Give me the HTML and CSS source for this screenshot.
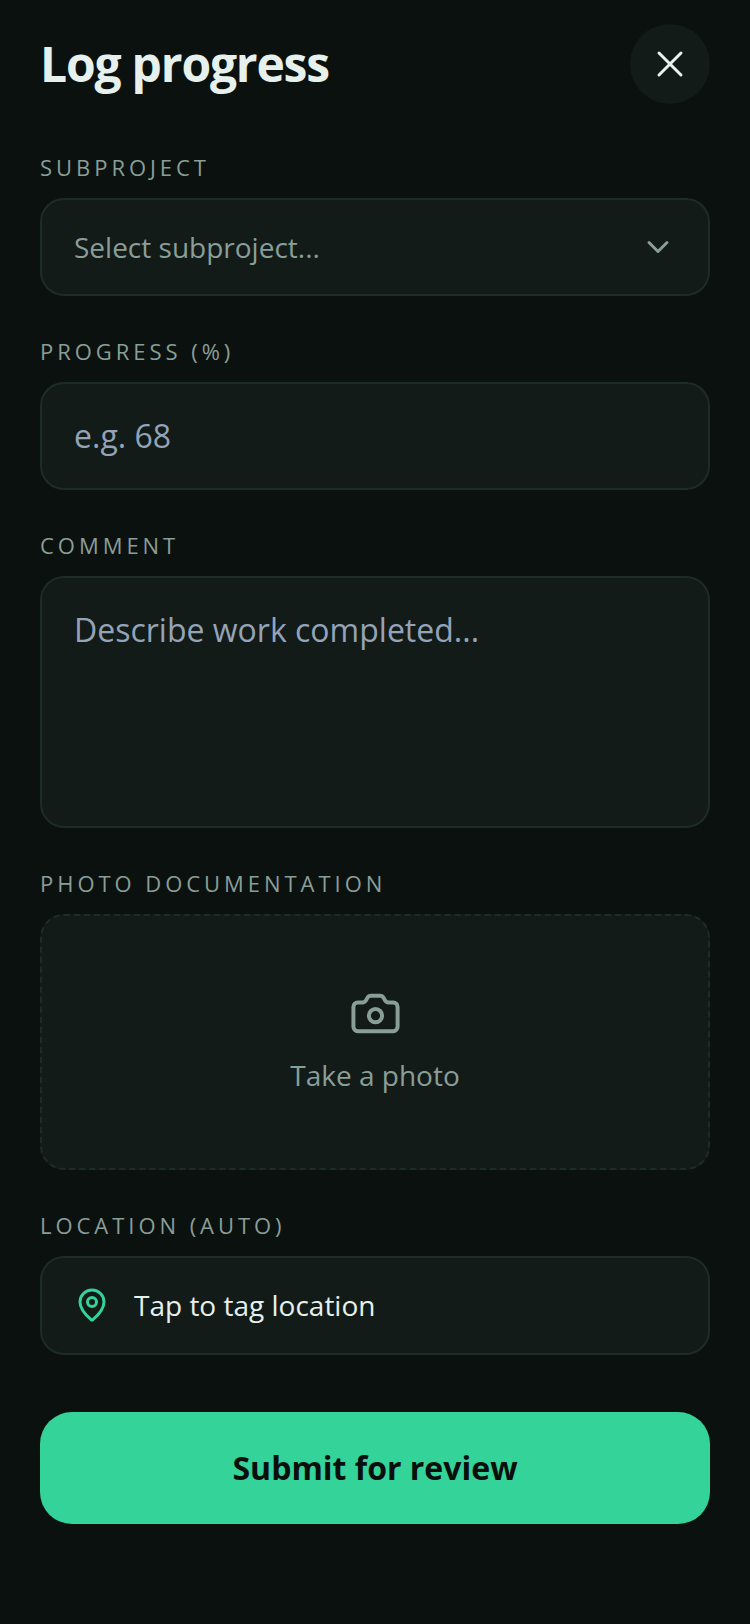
FILE: index.html
```html
<!DOCTYPE html>
<html lang="en">
<head>
    <meta charset="UTF-8">
    <meta name="viewport" content="width=device-width, initial-scale=1.0">
    <title>Log progress</title>
    <link rel="stylesheet" href="styles.css">
</head>
<body>
    <div class="sheet">
        <header class="sheet-header">
            <h1>Log progress</h1>
            <button class="close-btn" type="button" aria-label="Close">
                <svg width="44" height="44" viewBox="0 0 24 24" fill="none" stroke="#e8f2ef" stroke-width="1.6" stroke-linecap="round" stroke-linejoin="round">
                    <path d="M18 6 6 18"/>
                    <path d="m6 6 12 12"/>
                </svg>
            </button>
        </header>

        <div class="field">
            <label class="field-label">SUBPROJECT</label>
            <div class="control control-select">
                <span>Select subproject...</span>
                <svg width="36" height="36" viewBox="0 0 24 24" fill="none" stroke="#8a9e98" stroke-width="2" stroke-linecap="round" stroke-linejoin="round">
                    <path d="m6 9 6 6 6-6"/>
                </svg>
            </div>
        </div>

        <div class="field">
            <label class="field-label">PROGRESS (%)</label>
            <input class="control control-input" type="text" placeholder="e.g. 68">
        </div>

        <div class="field">
            <label class="field-label">COMMENT</label>
            <textarea class="control control-textarea" placeholder="Describe work completed..."></textarea>
        </div>

        <div class="field">
            <label class="field-label">PHOTO DOCUMENTATION</label>
            <div class="photo-drop">
                <svg width="53" height="53" viewBox="0 0 24 24" fill="none" stroke="#8a9e98" stroke-width="1.8" stroke-linecap="round" stroke-linejoin="round">
                    <path d="M13.997 4a2 2 0 0 1 1.76 1.05l.486.9A2 2 0 0 0 18.003 7H20a2 2 0 0 1 2 2v9a2 2 0 0 1-2 2H4a2 2 0 0 1-2-2V9a2 2 0 0 1 2-2h1.997a2 2 0 0 0 1.76-1.05l.486-.9A2 2 0 0 1 10.003 4z"/>
                    <circle cx="12" cy="13" r="3"/>
                </svg>
                <span>Take a photo</span>
            </div>
        </div>

        <div class="field">
            <label class="field-label">LOCATION (AUTO)</label>
            <div class="control control-location">
                <svg width="36" height="36" viewBox="0 0 24 24" fill="none" stroke="#34d399" stroke-width="2" stroke-linecap="round" stroke-linejoin="round">
                    <path d="M20 10c0 4.993-5.539 10.193-7.399 11.799a1 1 0 0 1-1.202 0C9.539 20.193 4 14.993 4 10a8 8 0 0 1 16 0"/>
                    <circle cx="12" cy="10" r="3"/>
                </svg>
                <span>Tap to tag location</span>
            </div>
        </div>

        <button class="submit-btn" type="button">Submit for review</button>
    </div>
</body>
</html>
```

FILE: styles.css
```css
* {
    box-sizing: border-box;
}

body {
    margin: 0;
    background-color: #0b110f;
    font-family: "Open Sans", sans-serif;
    color: #e8f2ef;
}

.sheet {
    height: 1624px;
    padding: 24px 40px 0;
    overflow: hidden;
}

.sheet-header {
    display: flex;
    justify-content: space-between;
    align-items: center;
    height: 80px;
    margin-bottom: 48px;
}

.sheet-header h1 {
    margin: 0 0 2px;
    font-size: 48px;
    font-weight: 700;
    letter-spacing: -1.2px;
    color: #e6f0ed;
}

.close-btn {
    display: flex;
    align-items: center;
    justify-content: center;
    width: 80px;
    height: 80px;
    padding: 0;
    border: none;
    border-radius: 50%;
    background-color: #121b18;
}

.field {
    margin-bottom: 40px;
}

.field-label {
    display: block;
    margin-bottom: 16px;
    height: 30px;
    line-height: 30px;
    font-size: 22px;
    letter-spacing: 3.96px;
    color: #8a9e98;
}

.control {
    display: block;
    width: 100%;
    border: 2px solid #1d2c28;
    border-radius: 24px;
    background-color: #121b18;
    font-family: inherit;
}

.control-select {
    display: flex;
    align-items: center;
    justify-content: space-between;
    height: 98px;
    padding: 0 32px;
    font-size: 28px;
    color: #8a9e98;
}

.control-input {
    height: 108px;
    padding: 0 32px 2px;
    font-size: 32px;
    color: #e8f2ef;
    outline: none;
}

.control-textarea {
    height: 252px;
    padding: 32px;
    font-size: 32px;
    line-height: 40px;
    color: #e8f2ef;
    outline: none;
    resize: none;
}

.control-input::placeholder,
.control-textarea::placeholder {
    color: #94a3b8;
    opacity: 1;
}

.photo-drop {
    display: flex;
    flex-direction: column;
    align-items: center;
    justify-content: center;
    gap: 16px;
    height: 256px;
    padding-bottom: 4px;
    border: 2px dashed #1d2c28;
    border-radius: 24px;
    background-color: #121b18;
    font-size: 28px;
    color: #8a9e98;
}

.control-location {
    display: flex;
    align-items: center;
    gap: 24px;
    height: 99px;
    padding: 0 32px 2px;
    font-size: 28px;
    color: #e6f0ed;
}

.submit-btn {
    display: block;
    width: 100%;
    height: 112px;
    margin-top: 57px;
    padding: 0 0 2px;
    border: none;
    border-radius: 32px;
    background-color: #34d399;
    font-family: inherit;
    font-size: 32px;
    font-weight: 700;
    color: #0a0f0e;
}
```
